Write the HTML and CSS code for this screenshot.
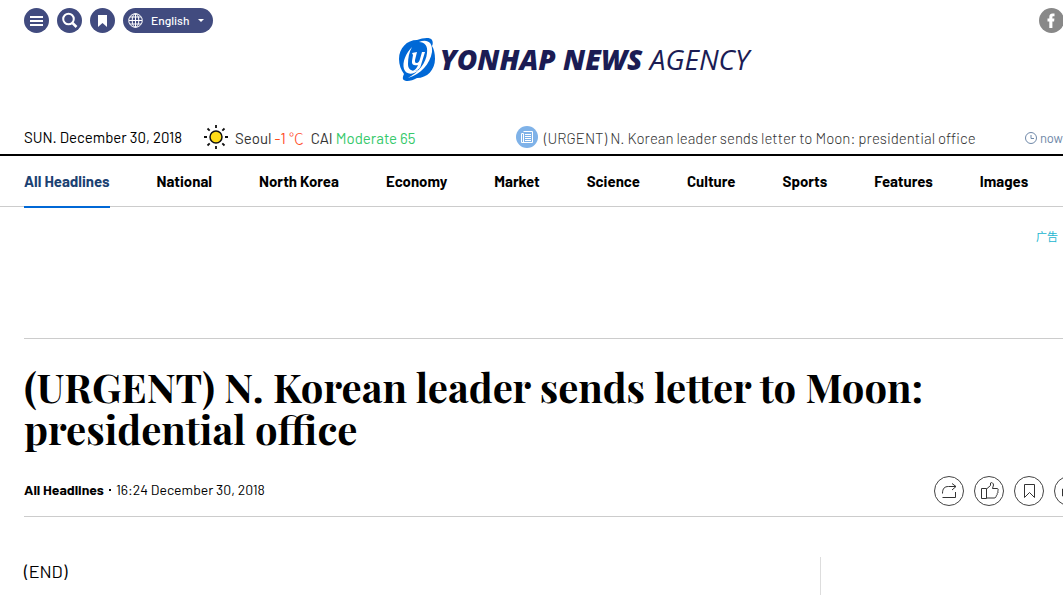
FILE: index.html
```html
<!DOCTYPE html>
<html lang="en">
<head>
    <meta charset="utf-8">
    <title>(URGENT) N. Korean leader sends letter to Moon: presidential office</title>
    <link rel="stylesheet" href="styles.css">
</head>
<body>
    <div class="page">
        <header class="header">
            <div class="tools">
                <button class="round" aria-label="Menu">
                    <svg width="25" height="25" viewBox="0 0 25 25"><path d="M6 9h13M6 13h13M6 17h13" stroke="#fff" stroke-width="2"/></svg>
                </button>
                <button class="round" aria-label="Search">
                    <svg width="25" height="25" viewBox="0 0 25 25" fill="none" stroke="#fff" stroke-width="2"><circle cx="11.500" cy="11" r="5.300"/><path d="M15.500 15l4 4" stroke-width="2.500"/></svg>
                </button>
                <button class="round" aria-label="Bookmarks">
                    <svg width="25" height="25" viewBox="0 0 25 25"><path d="M8 7h9v12l-4.500-4L8 19z" fill="#fff"/></svg>
                </button>
                <label class="language">
                    <svg width="15" height="15" viewBox="0 0 15 15" fill="none" stroke="#fff"><circle cx="7.500" cy="7.500" r="6.800"/><ellipse cx="7.500" cy="7.500" rx="3.300" ry="6.800"/><path d="M7.500 1v13M1 7.500h13M2 4h11M2 11h11"/></svg>
                    <select aria-label="Language">
                        <option>English</option>
                    </select>
                    <svg width="6" height="4" viewBox="0 0 6 4"><path d="M0 0h6L3 3z" fill="#fff"/></svg>
                </label>
                <a class="facebook" href="#" aria-label="Facebook">
                    <svg width="25" height="25" viewBox="0 0 25 25"><path d="M10.300 20v-6.500H8.500v-3h1.800V9c0-2.300 1-3.500 3.200-3.500h2v2.800h-1.200c-.7 0-.9.300-.9.900v1.300h2l-.3 3h-1.700V20z" fill="#fff"/></svg>
                </a>
            </div>
            <a class="logo" href="#">
                <svg width="37" height="44" viewBox="0 0 37 44">
                    <path d="M0 21C0 10 8 2 18 2c6-2 13-3 15 0 1 2 1 4 0 6 2 3 3 8 3 13 0 11-8 19-18 19-5 3-11 4-13 2-2-1-1-4 0-6-3-4-5-9-5-15z" fill="#0068d6"/>
                    <path d="M20 4C27 1 34 3 33 14 31 26 22 36 9 40c11-6 18-15 19-25 1-7-2-11-8-11z" fill="#fff"/>
                    <path d="M13 9C7 15 3 24 5 31c2 6 9 6 15 1-7 2-11 0-11-6 0-6 1-12 4-17z" fill="#fff"/>
                    <path d="M13 15l5-1-2 8c0 2 0 3 1.500 3 2 0 3-2 3.500-4l2-7h3l-4 13c-1 4-4 6-8 6 2-1 4-3 5-6-4 1-6.500 0-6-4l1-6z" fill="#fff"/>
                </svg>
                <span class="logo-text"><b>YONHAP NEWS</b> <span>AGENCY</span></span>
            </a>
            <div class="info">
                <div class="today">
                    <time datetime="2018-12-30">SUN. December 30, 2018</time>
                    <svg width="24" height="24" viewBox="0 0 24 24" stroke="#111" stroke-width="1.800"><path d="M12 0v3M12 21v3M0 12h3M21 12h3M3.500 3.500l2.200 2.200M18.300 18.300l2.200 2.200M20.500 3.500l-2.200 2.200M5.700 18.300l-2.200 2.200"/><circle cx="12" cy="12" r="6" fill="#ffdc18" stroke-width="1.500"/></svg>
                    <span class="weather">Seoul <span class="temp">-1 <span class="unit">℃</span></span></span>
                    <span class="weather">CAI <span class="air">Moderate 65</span></span>
                </div>
                <div class="ticker">
                    <svg width="22" height="22" viewBox="0 0 22 22"><circle cx="11" cy="11" r="11" fill="#7fb2e8"/><path d="M7.500 5.500h9v11h-11v-9h2v9M9 8.500h6M9 10.500h6M9 12.500h6M9 14.500h6" fill="none" stroke="#fff"/></svg>
                    <a href="#">(URGENT) N. Korean leader sends letter to Moon: presidential office</a>
                    <span class="now">
                        <svg width="12" height="12" viewBox="0 0 12 12" fill="none" stroke="#6f88a8"><circle cx="6" cy="6" r="5.500"/><path d="M6 3v3.500h3"/></svg>
                        now
                    </span>
                </div>
            </div>
        </header>

        <nav class="menu">
            <a class="active" href="#">All Headlines</a>
            <a href="#">National</a>
            <a href="#">North Korea</a>
            <a href="#">Economy</a>
            <a href="#">Market</a>
            <a href="#">Science</a>
            <a href="#">Culture</a>
            <a href="#">Sports</a>
            <a href="#">Features</a>
            <a href="#">Images</a>
        </nav>

        <main class="content">
            <div class="ad"><span lang="zh">广告</span></div>
            <h1>(URGENT) N. Korean leader sends letter to Moon: presidential office</h1>
            <div class="meta">
                <p><a href="#">All Headlines</a><span class="dot"></span><time datetime="2018-12-30T16:24">16:24 December 30, 2018</time></p>
                <div class="actions">
                    <button aria-label="Share">
                        <svg width="28" height="28" viewBox="0 0 28 28"><path d="M7.500 16.500c0-5 2-7 6-7h7.500M17 6.500l4 3-4 3.500M7.500 20.500h13V15"/></svg>
                    </button>
                    <button aria-label="Like">
                        <svg width="28" height="28" viewBox="0 0 28 28"><path d="M6.500 11.500h5v10h-5zM11.500 12l4-3.500V6c1-1 3 0 3 2l-1 3.500h4.500c1.500 0 1.500 2 .5 2.500 1 1 .5 2-.5 2.500.5 1 0 2-.8 2.200 0 1.500-.7 2.300-2.200 2.300h-7.500"/></svg>
                    </button>
                    <button aria-label="Bookmark">
                        <svg width="28" height="28" viewBox="0 0 28 28"><path d="M9.500 7.500h10v13l-5-5-5 5z"/></svg>
                    </button>
                    <button aria-label="Print">
                        <svg width="28" height="28" viewBox="0 0 28 28"><path d="M9 19H7.500v-7h13v7H19M10 12V7h8v5M10 16h8v5h-8z"/></svg>
                    </button>
                </div>
            </div>
            <div class="columns">
                <article><p>(END)</p></article>
                <aside></aside>
            </div>
        </main>
    </div>
</body>
</html>
```
FILE: styles.css
```css
* {
    box-sizing: border-box;
}

html {
    overflow: hidden;
}

body {
    margin: 0;
    background: #fff;
    color: #000;
    font-family: Barlow, Roboto, "Liberation Sans", sans-serif;
    font-size: 15px;
}

a {
    color: inherit;
    text-decoration: none;
}

p {
    margin: 0;
}

button {
    padding: 0;
    border: none;
    cursor: pointer;
}

svg {
    display: block;
    flex-shrink: 0;
}

.page {
    min-width: 1148px;
}

/* header */
.header {
    padding: 8px 24px 0;
    border-bottom: 2px solid #000;
}

.tools {
    display: flex;
    gap: 8px;
}

.round,
.facebook {
    width: 25px;
    height: 25px;
    border-radius: 50%;
    background: #414b7f;
}

.facebook {
    margin-left: auto;
    margin-right: 60px;
    background: #888;
}

.language {
    display: flex;
    align-items: center;
    width: 90px;
    height: 25px;
    padding: 0 9px 0 5px;
    border-radius: 13px;
    background: #414b7f;
}

.language select {
    flex: 1;
    min-width: 0;
    height: 23px;
    margin-bottom: 2px;
    padding: 0 0 0 8px;
    border: none;
    appearance: none;
    background: none;
    color: #fff;
    font-family: inherit;
    font-size: 12px;
    font-weight: 500;
}

.logo {
    display: flex;
    justify-content: center;
    align-items: center;
    gap: 4px;
    height: 44px;
    margin-top: 5px;
}

.logo-text {
    color: #1b1c54;
    font-family: "Open Sans", "Noto Sans", sans-serif;
    font-size: 28px;
    font-style: italic;
    font-weight: 400;
    line-height: 40px;
    padding-bottom: 3px;
}

.logo-text b {
    font-weight: 800;
}

.info {
    display: grid;
    grid-template-columns: 492px 1fr;
    align-items: center;
    height: 34px;
    margin-top: 38px;
}

.today,
.ticker {
    display: flex;
    align-items: center;
}

.today svg {
    margin: 0 7px 0 22px;
}

.weather {
    padding-top: 2px;
    margin-right: 7px;
    color: #333;
}

.temp {
    color: #ff4b1f;
}

.unit {
    font-family: "Noto Sans CJK KR", sans-serif;
    font-weight: 300;
    line-height: 1;
}

.air {
    color: #36c96b;
}

.ticker a {
    padding-top: 2px;
    margin-left: 6px;
    color: #333;
    font-weight: 300;
}

.now {
    display: flex;
    align-items: center;
    gap: 3px;
    padding-top: 2px;
    margin-left: auto;
    margin-right: 61px;
    color: #6f88a8;
    font-size: 13px;
}

/* menu */
.menu {
    display: flex;
    gap: 47px;
    height: 51px;
    padding: 0 24px;
    border-bottom: 1px solid #ccc;
    font-weight: 700;
    line-height: 51px;
}

.menu .active {
    height: 52px;
    border-bottom: 2px solid #0068d6;
    color: #1c4272;
}

/* article */
.content {
    padding: 0 24px;
}

.ad {
    height: 132px;
    padding: 22px 66px 0 0;
    border-bottom: 1px solid #ccc;
    color: #22b5d0;
    font-family: "Noto Sans CJK SC", sans-serif;
    font-size: 11px;
    line-height: 15px;
    text-align: right;
}

h1 {
    margin: 27px 0 26px;
    max-width: 1000px;
    font-family: "Playfair Display", "Liberation Serif", serif;
    font-size: 40px;
    font-weight: 700;
    line-height: 42px;
}

.meta {
    display: flex;
    justify-content: space-between;
    align-items: center;
    padding-bottom: 10px;
    border-bottom: 1px solid #ccc;
    font-size: 14px;
}

.meta p {
    display: flex;
    align-items: center;
    padding-bottom: 3px;
}

.meta p a {
    font-weight: 700;
}

.dot {
    width: 2px;
    height: 2px;
    margin: 0 5px;
    background: #000;
}

.actions {
    display: flex;
    gap: 10px;
    margin-right: 40px;
}

.actions button {
    width: 30px;
    height: 30px;
    border: 1px solid #444;
    border-radius: 50%;
    background: #fff;
}

.actions svg {
    fill: none;
    stroke: #333;
}

.columns {
    display: grid;
    grid-template-columns: 1fr 304px;
    margin-top: 40px;
}

article {
    min-height: 38px;
    font-size: 18px;
    line-height: 29px;
}

aside {
    border-left: 1px solid #ddd;
}
```
